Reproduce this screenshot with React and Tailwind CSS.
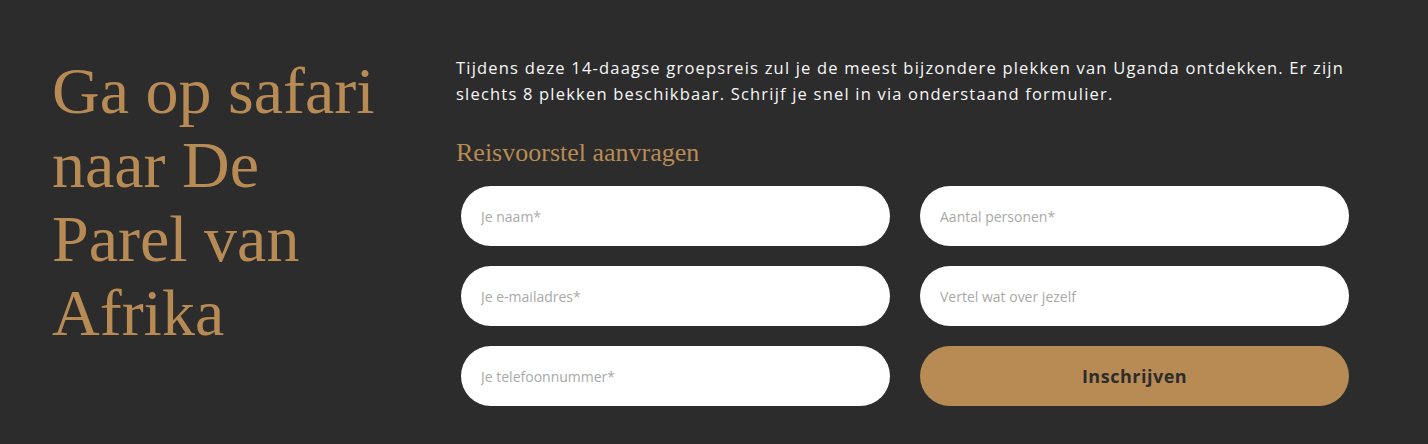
import React from 'react'

const serif = { fontFamily: '"Liberation Serif", "DejaVu Serif", serif' }

const Field = ({ placeholder }) => (
  <input
    type="text"
    placeholder={placeholder}
    className="h-[60px] w-full rounded-full bg-white px-5 text-[14px] text-[#333] placeholder:text-[#a9a9a9] outline-none"
  />
)

export default function App() {
  return (
    <div
      className="w-[1428px] h-[444px] bg-[#2c2c2c] flex"
      style={{ fontFamily: '"Open Sans", "Noto Sans", sans-serif' }}
    >
      <div className="w-[456px] shrink-0 pl-[52px] pt-[54px]">
        <h1 className="w-[340px] text-[66px] leading-[74px] text-[#b88b55]" style={serif}>
          Ga op safari naar De Parel van Afrika
        </h1>
      </div>
      <div className="w-[893px] shrink-0 pt-[55px]">
        <p className="text-[16.5px] leading-[26px] tracking-[1.2px] text-[#f7f7f7]">
          Tijdens deze 14-daagse groepsreis zul je de meest bijzondere plekken van Uganda ontdekken. Er zijn slechts 8 plekken beschikbaar. Schrijf je snel in via onderstaand formulier.
        </p>
        <h2 className="mt-[31px] text-[26px] leading-[30px] text-[#b88b55]" style={serif}>
          Reisvoorstel aanvragen
        </h2>
        <form className="mt-[18px] ml-[5px] grid grid-cols-2 gap-x-[30px] gap-y-[20px]">
          <Field placeholder="Je naam*" />
          <Field placeholder="Aantal personen*" />
          <Field placeholder="Je e-mailadres*" />
          <Field placeholder="Vertel wat over jezelf" />
          <Field placeholder="Je telefoonnummer*" />
          <button
            type="button"
            className="h-[60px] w-full rounded-full bg-[#b88b55] text-[18px] font-bold tracking-[0.5px] text-[#2c2c2c]"
          >
            Inschrijven
          </button>
        </form>
      </div>
    </div>
  )
}
